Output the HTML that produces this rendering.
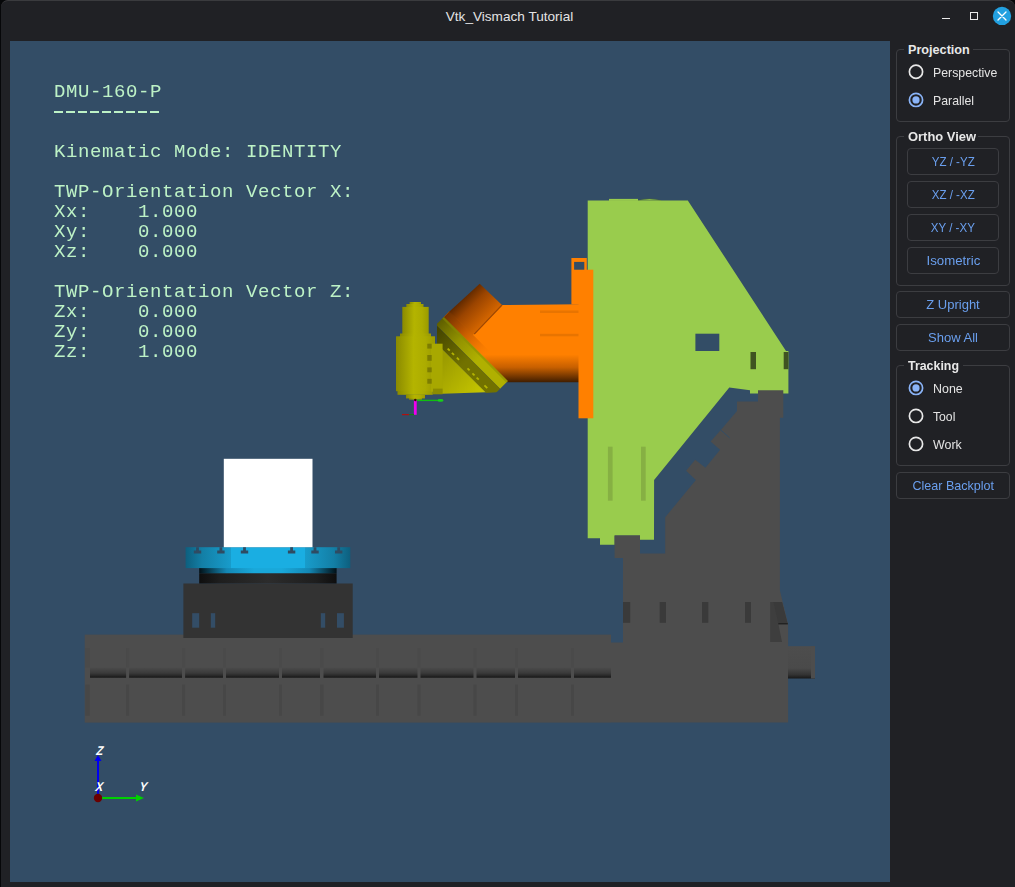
<!DOCTYPE html>
<html><head><meta charset="utf-8">
<style>
html,body{margin:0;padding:0;}
body{width:1015px;height:887px;overflow:hidden;position:relative;background:#060709;font-family:"Liberation Sans",sans-serif;}
.abs{position:absolute;}
#topline{left:4px;top:0;width:1009px;height:1px;background:#3a3b3e;}
#title{left:0;top:8.7px;width:1019px;text-align:center;color:#e4e4e4;font-size:13.6px;line-height:16px;}
#vp{left:10px;top:41px;width:880px;height:841px;background:#334d66;overflow:hidden;}
#info{will-change:transform;left:43.5px;top:40.5px;color:#bdf2c6;font-family:"Liberation Mono",monospace;font-size:19px;letter-spacing:0.6px;line-height:20px;white-space:pre;}
.grp{position:absolute;border:1px solid #3c3d41;border-radius:4px;}
.gt{position:absolute;background:#202125;color:#e8e8e8;font-weight:bold;font-size:12.4px;line-height:14px;padding:0 4.5px;}
.btn{position:absolute;border:1px solid #3c3d41;border-radius:4px;color:#6a9fee;font-size:13px;text-align:center;box-sizing:border-box;}
.rad{position:absolute;width:15px;height:15px;box-sizing:border-box;border:1.6px solid #e6e6e6;border-radius:50%;}
.rad.on{border-color:#8ab4f8;}
.rad.on::after{content:"";position:absolute;left:2.7px;top:2.7px;width:6.4px;height:6.4px;border-radius:50%;background:#8ab4f8;}
.rl{position:absolute;color:#e4e4e4;font-size:12.2px;line-height:14px;}
</style></head><body>
<div class="abs" style="left:1px;top:0;width:1014px;height:887px;box-sizing:border-box;background:#202125;border-top:1px solid #3a3b3e;border-radius:7px 7px 0 0"></div>
<div id="title" class="abs">Vtk_Vismach Tutorial</div>
<!-- window controls -->
<div class="abs" style="left:942px;top:17.6px;width:8.2px;height:1.6px;background:#eaeaea"></div>
<div class="abs" style="left:969.6px;top:11.6px;width:8.6px;height:8.6px;box-sizing:border-box;border:1.2px solid #eaeaea"></div>
<svg class="abs" style="left:990px;top:4px" width="24" height="24" viewBox="990 4 24 24">
<circle cx="1002" cy="15.9" r="9.2" fill="#22a0e0"/>
<path d="M998 12 L1006 20 M1006 12 L998 20" stroke="#fff" stroke-width="1.3" stroke-linecap="round"/>
</svg>

<div id="vp" class="abs">
<svg class="abs" style="left:0;top:0" width="880" height="841" viewBox="10 41 880 841" shape-rendering="geometricPrecision">
<defs>
<linearGradient id="bedg" x1="0" y1="0" x2="0" y2="1"><stop offset="0" stop-color="#4b4b4b"/><stop offset="0.55" stop-color="#3a3a3a"/><stop offset="0.85" stop-color="#242424"/><stop offset="1" stop-color="#141414"/></linearGradient>
<linearGradient id="spg" x1="0" y1="0" x2="0" y2="1"><stop offset="0" stop-color="#4d4d4d"/><stop offset="0.68" stop-color="#4a4a4a"/><stop offset="0.88" stop-color="#333"/><stop offset="1" stop-color="#181818"/></linearGradient>
<linearGradient id="tblg" x1="0" y1="0" x2="1" y2="0"><stop offset="0" stop-color="#0d5f7e"/><stop offset="0.1" stop-color="#137fa6"/><stop offset="0.275" stop-color="#189ccb"/><stop offset="0.275" stop-color="#1aaee2"/><stop offset="0.725" stop-color="#1aaee2"/><stop offset="0.725" stop-color="#189ccb"/><stop offset="0.9" stop-color="#137fa6"/><stop offset="1" stop-color="#0d5f7e"/></linearGradient>
<linearGradient id="rimg" x1="0" y1="0" x2="1" y2="0"><stop offset="0" stop-color="#021016"/><stop offset="0.2" stop-color="#1488b5"/><stop offset="0.4" stop-color="#19a8da"/><stop offset="0.6" stop-color="#19a8da"/><stop offset="0.8" stop-color="#1488b5"/><stop offset="1" stop-color="#021016"/></linearGradient>
<linearGradient id="ringg" x1="0" y1="0" x2="1" y2="0"><stop offset="0" stop-color="#0e0e0e"/><stop offset="0.15" stop-color="#1e1e1e"/><stop offset="0.5" stop-color="#2c2c2c"/><stop offset="0.85" stop-color="#1e1e1e"/><stop offset="1" stop-color="#0e0e0e"/></linearGradient>
<linearGradient id="ramg" gradientUnits="userSpaceOnUse" x1="0" y1="304" x2="0" y2="383"><stop offset="0" stop-color="#ff8000"/><stop offset="0.64" stop-color="#ff8000"/><stop offset="0.8" stop-color="#c86000"/><stop offset="1" stop-color="#3a1a00"/></linearGradient>
<linearGradient id="capg" gradientUnits="userSpaceOnUse" x1="462" y1="298" x2="488" y2="322"><stop offset="0" stop-color="#8a3a00"/><stop offset="1" stop-color="#e06c00"/></linearGradient>
<linearGradient id="yelg" x1="0" y1="0" x2="1" y2="0"><stop offset="0" stop-color="#8a8a00"/><stop offset="0.45" stop-color="#b4b400"/><stop offset="0.75" stop-color="#acac00"/><stop offset="1" stop-color="#9a9a00"/></linearGradient>
<linearGradient id="coneg" gradientUnits="userSpaceOnUse" x1="443" y1="360" x2="480" y2="392"><stop offset="0" stop-color="#9c9c00"/><stop offset="1" stop-color="#c4c400"/></linearGradient>
<clipPath id="bandclip"><polygon points="437,250 600,250 600,386 506,386.5 501,392 437,396"/></clipPath>
<linearGradient id="capG" gradientUnits="userSpaceOnUse" x1="538" y1="0" x2="572" y2="0"><stop offset="0" stop-color="#5e2800"/><stop offset="0.35" stop-color="#9a4400"/><stop offset="1" stop-color="#d86800"/></linearGradient>
<linearGradient id="lipG" gradientUnits="userSpaceOnUse" x1="538" y1="0" x2="598" y2="0"><stop offset="0" stop-color="#6e3000"/><stop offset="0.35" stop-color="#b45200"/><stop offset="0.7" stop-color="#e06c00" stop-opacity="0.6"/><stop offset="1" stop-color="#ff8000" stop-opacity="0"/></linearGradient>
<linearGradient id="bandL" gradientUnits="userSpaceOnUse" x1="538" y1="0" x2="592" y2="0"><stop offset="0" stop-color="#5e5e00"/><stop offset="0.5" stop-color="#929200"/><stop offset="1" stop-color="#b0b000"/></linearGradient>
<linearGradient id="bandD" gradientUnits="userSpaceOnUse" x1="538" y1="0" x2="585" y2="0"><stop offset="0" stop-color="#404000"/><stop offset="1" stop-color="#727200"/></linearGradient>
</defs>
<!-- bed -->
<rect x="84.7" y="634.6" width="526.3" height="88" fill="#4d4d4d"/>
<rect x="611" y="642.5" width="177.1" height="80" fill="#4d4d4d"/>
<g fill="url(#bedg)">
<rect x="90" y="667.5" width="36.1" height="10.2"/><rect x="129.1" y="667.5" width="52.9" height="10.2"/><rect x="185.1" y="667.5" width="37.9" height="10.2"/><rect x="226" y="667.5" width="53" height="10.2"/><rect x="282" y="667.5" width="38" height="10.2"/><rect x="323.5" y="667.5" width="52.5" height="10.2"/><rect x="379" y="667.5" width="38.5" height="10.2"/><rect x="420.5" y="667.5" width="53.0" height="10.2"/><rect x="476.5" y="667.5" width="38.5" height="10.2"/><rect x="518" y="667.5" width="53" height="10.2"/><rect x="574" y="667.5" width="37" height="10.2"/>
</g>
<g fill="#474747">
<rect x="85.4" y="684.6" width="4.2" height="31.1"/><rect x="126.1" y="684.6" width="3.0" height="31.1"/><rect x="182" y="684.6" width="3.1" height="31.1"/><rect x="223" y="684.6" width="3" height="31.1"/><rect x="279" y="684.6" width="3" height="31.1"/><rect x="320" y="684.6" width="3.5" height="31.1"/><rect x="376" y="684.6" width="3" height="31.1"/><rect x="417.5" y="684.6" width="3.0" height="31.1"/><rect x="473.5" y="684.6" width="3.0" height="31.1"/><rect x="515" y="684.6" width="3" height="31.1"/><rect x="571" y="684.6" width="3" height="31.1"/>
</g>
<g fill="#4a4a4a"><rect x="85.4" y="648" width="4.2" height="19.5"/><rect x="126.1" y="648" width="3.0" height="19.5"/><rect x="182" y="648" width="3.1" height="19.5"/><rect x="223" y="648" width="3" height="19.5"/><rect x="279" y="648" width="3" height="19.5"/><rect x="320" y="648" width="3.5" height="19.5"/><rect x="376" y="648" width="3" height="19.5"/><rect x="417.5" y="648" width="3.0" height="19.5"/><rect x="473.5" y="648" width="3.0" height="19.5"/><rect x="515" y="648" width="3" height="19.5"/><rect x="571" y="648" width="3" height="19.5"/></g>
<!-- right spindle stub -->
<rect x="788" y="646.2" width="27" height="32.3" fill="url(#spg)"/>
<rect x="811" y="646.2" width="4" height="32.3" fill="#4d4d4d"/>
<!-- green head -->
<rect x="609" y="198.9" width="29" height="2" fill="#99cc4d"/>
<path d="M638 200.6 Q649.5 197.2 661 200.6 Z" fill="#99cc4d" stroke="#4a6a30" stroke-width="0.5"/>
<polygon fill="#99cc4d" points="587.7,200.4 687.8,200.4 786,351 788.4,351 788.4,393.5 750,393.5 750,390.2 729.3,387.5 654.1,480 654,539.8 640,539.8 640,535.5 614.6,535.5 614.6,544.7 600,544.7 600,538.3 587.7,538.3"/>
<rect x="695.4" y="333.7" width="23.9" height="17.3" fill="#334d66"/>
<rect x="750.5" y="352" width="5.5" height="17.2" fill="#3f5321"/>
<rect x="783.7" y="352" width="4.7" height="17.2" fill="#3f5321"/>
<rect x="607.9" y="446.7" width="4.7" height="54" fill="#86b043"/>
<rect x="641" y="446.7" width="4.7" height="54" fill="#86b043"/>
<!-- column -->
<polygon fill="#4d4d4d" points="758,390.2 783.3,390.2 783.3,417.7 779.9,417.7 779.9,590.5 788.1,624.2 788.1,644 623,644 623,558.1 614.6,558.1 614.6,535.5 640,535.5 640,553.6 665.2,553.6 665.2,517.3 695.9,479.9 686.1,470.7 695.2,459.8 705.4,467.7 720.1,449.8 710.6,441.5 720.8,430 737,411 737,401.5 758,401.5"/>
<line x1="720.8" y1="430" x2="729.6" y2="437.8" stroke="#334d66" stroke-width="1"/>
<g fill="#3a3a3a">
<rect x="623" y="602" width="7.2" height="20.8"/><rect x="659.7" y="602" width="6.3" height="20.8"/><rect x="702" y="602" width="6.3" height="20.8"/><rect x="745" y="602" width="6" height="20.8"/>
<polygon points="770.2,602.1 782,602.1 787.6,623.5 778.3,623.5 782,642.1 770.2,642.1" fill="#3e3e3e"/>
<polygon points="773.5,602.1 782,602.1 787.6,623.5 778.3,623.5" fill="#3a3a3a"/><rect x="778.3" y="623.2" width="9.5" height="1.2" fill="#1c1c1c"/>
</g>
<!-- orange ram -->
<polygon fill="url(#ramg)" points="444.2,316.8 449.2,311.4 451.9,311.8 474.3,334.1 502,305 580,304.2 580,382.2 506.7,382.2"/>

<g transform="rotate(45)">
<rect x="538" y="-97.7" width="60" height="8.2" fill="url(#lipG)"/>
<polygon points="538,-97.2 539.8,-138.6 571,-139.3 571.3,-97.2" fill="url(#capG)"/>
</g>
<line x1="502" y1="305" x2="474.3" y2="334.1" stroke="#a04800" stroke-width="1.2"/>
<rect x="540" y="310.5" width="40" height="2.5" fill="#e87400"/>
<rect x="540" y="333.8" width="40" height="2.5" fill="#e87400"/>
<rect x="571.4" y="258" width="15.4" height="46.5" fill="#ff8000"/>
<rect x="578.5" y="269.7" width="14.8" height="148.6" fill="#ff8000"/>
<rect x="574.1" y="261.9" width="10.2" height="7.8" fill="#334d66"/>
<!-- yellow swivel band -->
<g clip-path="url(#bandclip)">
<g transform="rotate(45)">
<rect x="538" y="-89.7" width="90.5" height="11" fill="url(#bandL)"/>
<rect x="538" y="-89.7" width="90.5" height="2.2" fill="#8a8a00" opacity="0.55"/>
<rect x="538" y="-78.7" width="90.5" height="13" fill="url(#bandD)"/>
<g fill="#b4b400"><rect x="563" y="-71" width="3" height="1.8"/><rect x="569" y="-71" width="3" height="1.8"/><rect x="576" y="-71" width="3" height="1.8"/><rect x="591" y="-71" width="3" height="1.8"/><rect x="598" y="-71" width="3" height="1.8"/><rect x="604" y="-71" width="3" height="1.8"/><rect x="615" y="-71" width="4" height="1.8"/></g>
</g>
</g>
<polygon fill="url(#coneg)" points="437,344.1 485.5,392.3 443,393.7 437,393.7"/>
<!-- spindle head body -->
<g fill="url(#yelg)">
<rect x="409.6" y="302" width="11.4" height="3"/>
<rect x="406.3" y="304" width="17.2" height="3.5"/>
<rect x="402.3" y="306.9" width="26.4" height="27.5"/>
<rect x="400" y="333.5" width="31" height="3.5"/>
<rect x="396" y="336.3" width="39" height="54.9"/>
<rect x="397.5" y="391" width="35.3" height="3.8"/><rect x="406" y="394.6" width="19" height="3.8"/><rect x="409" y="398" width="13" height="1.6"/>
</g>
<rect x="431" y="343.7" width="11.6" height="48" fill="#a8a800"/>
<rect x="433" y="388.6" width="9.6" height="5.7" fill="#8c8c00"/>
<g fill="#7c7c00">
<rect x="427.3" y="343.7" width="4.4" height="4.9"/><rect x="427.3" y="355" width="4.4" height="5.8"/><rect x="427.3" y="367.4" width="4.4" height="4.9"/><rect x="427.3" y="378.8" width="4.4" height="4.9"/>
</g>
<!-- tool -->
<line x1="416" y1="400.4" x2="442" y2="400.4" stroke="#10c010" stroke-width="1.4"/>
<ellipse cx="440.5" cy="400.4" rx="3" ry="1.4" fill="#18d018"/>
<line x1="415.3" y1="400" x2="415.3" y2="414.8" stroke="#f000f0" stroke-width="2.8"/>
<circle cx="415.3" cy="400" r="1.2" fill="#400000"/>
<line x1="402" y1="414.6" x2="409.2" y2="414.6" stroke="#b01010" stroke-width="1.2"/>
<line x1="409.2" y1="414.6" x2="414" y2="414.6" stroke="#108010" stroke-width="1.2"/>
<!-- rotary table -->
<rect x="183.4" y="583.5" width="169.3" height="54.5" fill="#333333"/>
<g fill="#334d66">
<rect x="192.2" y="613.2" width="7" height="14.5"/><rect x="210.8" y="613.2" width="4.4" height="14.5"/><rect x="320.8" y="613.2" width="4.4" height="14.5"/><rect x="337" y="613.2" width="6.9" height="14.5"/>
</g>
<rect x="199.2" y="573.2" width="137.4" height="10.3" fill="url(#ringg)"/>
<rect x="199.2" y="568" width="137.4" height="5.2" fill="url(#rimg)"/>
<rect x="185.6" y="547.2" width="164.7" height="20.9" fill="url(#tblg)"/>
<rect x="223.8" y="458.8" width="88.7" height="88.4" fill="#ffffff"/>
<g fill="#2f4b62"><path d="M196.1 547.2h2.8v3.4h2.3v3h-7.4v-3h2.3z"/><path d="M219.5 547.2h2.8v3.4h2.3v3h-7.4v-3h2.3z"/><path d="M243.1 547.2h2.8v3.4h2.3v3h-7.4v-3h2.3z"/><path d="M290.2 547.2h2.8v3.4h2.3v3h-7.4v-3h2.3z"/><path d="M313.6 547.2h2.8v3.4h2.3v3h-7.4v-3h2.3z"/><path d="M337.3 547.2h2.8v3.4h2.3v3h-7.4v-3h2.3z"/></g>
<!-- axes triad -->
<line x1="98" y1="798" x2="98" y2="760" stroke="#0000f0" stroke-width="2"/>
<polygon points="94.5,761 101.5,761 98,755" fill="#0000f0"/>
<line x1="98" y1="798" x2="137" y2="798" stroke="#00d000" stroke-width="2"/>
<polygon points="136,794.5 136,801.5 144,798" fill="#00d000"/>
<circle cx="98" cy="798" r="4.2" fill="#6a0000"/>
<g fill="#ffffff" font-family="Liberation Sans" font-weight="bold" font-style="italic" font-size="12.8">
<text transform="translate(96,755.3) skewX(-6) scale(0.88,1)">Z</text><text transform="translate(95.3,791.2) skewX(-6) scale(0.88,1)">X</text><text transform="translate(139.3,791.2) skewX(-6) scale(0.88,1)">Y</text>
</g>
</svg>
<div class="abs" style="left:44px;top:69.5px;width:106px;height:2.6px;background:repeating-linear-gradient(90deg,#bdf2c6 0 9px,transparent 9px 12px)"></div>
<div id="info" class="abs">DMU-160-P


Kinematic Mode: IDENTITY

TWP-Orientation Vector X:
Xx:    1.000
Xy:    0.000
Xz:    0.000

TWP-Orientation Vector Z:
Zx:    0.000
Zy:    0.000
Zz:    1.000</div>
</div>

<!-- right panel -->
<div class="grp" style="left:896px;top:49px;width:112px;height:71px"></div>
<div class="gt" style="left:903.5px;top:42.7px"><span style="display:inline-block;transform:scaleX(1.02);transform-origin:0 0">Projection</span></div>
<svg class="abs" style="left:0;top:0" width="1015" height="887"><circle cx="916" cy="71.8" r="6.6" fill="none" stroke="#e8e8e8" stroke-width="1.7"/></svg>
<div class="rl" style="left:933px;top:66.0px"><span style="display:inline-block;transform:scaleX(1.01);transform-origin:0 0">Perspective</span></div>
<svg class="abs" style="left:0;top:0" width="1015" height="887"><circle cx="916" cy="99.9" r="6.6" fill="none" stroke="#8ab4f8" stroke-width="1.7"/><circle cx="916" cy="99.9" r="3.6" fill="#8ab4f8"/></svg>
<div class="rl" style="left:933px;top:94.0px"><span style="display:inline-block;transform:scaleX(1.01);transform-origin:0 0">Parallel</span></div>

<div class="grp" style="left:896px;top:136px;width:112px;height:148px"></div>
<div class="gt" style="left:903.5px;top:129.7px"><span style="display:inline-block;transform:scaleX(1.045);transform-origin:0 0">Ortho View</span></div>
<div class="btn" style="left:907px;top:148px;width:92px;height:27px;line-height:25px"><span style="display:inline-block;transform:scaleX(0.89)">YZ / -YZ</span></div>
<div class="btn" style="left:907px;top:181px;width:92px;height:27px;line-height:25px"><span style="display:inline-block;transform:scaleX(0.89)">XZ / -XZ</span></div>
<div class="btn" style="left:907px;top:214px;width:92px;height:27px;line-height:25px"><span style="display:inline-block;transform:scaleX(0.89)">XY / -XY</span></div>
<div class="btn" style="left:907px;top:247px;width:92px;height:27px;line-height:25px"><span style="display:inline-block;transform:scaleX(1.02)">Isometric</span></div>

<div class="btn" style="left:896px;top:291px;width:114px;height:27px;line-height:25px">Z Upright</div>
<div class="btn" style="left:896px;top:324px;width:114px;height:27px;line-height:25px">Show All</div>

<div class="grp" style="left:896px;top:365px;width:112px;height:99px"></div>
<div class="gt" style="left:903.5px;top:358.7px">Tracking</div>
<svg class="abs" style="left:0;top:0" width="1015" height="887"><circle cx="916" cy="387.9" r="6.6" fill="none" stroke="#8ab4f8" stroke-width="1.7"/><circle cx="916" cy="387.9" r="3.6" fill="#8ab4f8"/></svg>
<div class="rl" style="left:933px;top:382.0px"><span style="display:inline-block;transform:scaleX(1.02);transform-origin:0 0">None</span></div>
<svg class="abs" style="left:0;top:0" width="1015" height="887"><circle cx="916" cy="415.9" r="6.6" fill="none" stroke="#e8e8e8" stroke-width="1.7"/></svg>
<div class="rl" style="left:933px;top:410.0px">Tool</div>
<svg class="abs" style="left:0;top:0" width="1015" height="887"><circle cx="916" cy="443.9" r="6.6" fill="none" stroke="#e8e8e8" stroke-width="1.7"/></svg>
<div class="rl" style="left:933px;top:438.0px"><span style="display:inline-block;transform:scaleX(1.02);transform-origin:0 0">Work</span></div>

<div class="btn" style="left:896px;top:472px;width:114px;height:27px;line-height:25px"><span style="display:inline-block;transform:scaleX(0.965)">Clear Backplot</span></div>
</body></html>
